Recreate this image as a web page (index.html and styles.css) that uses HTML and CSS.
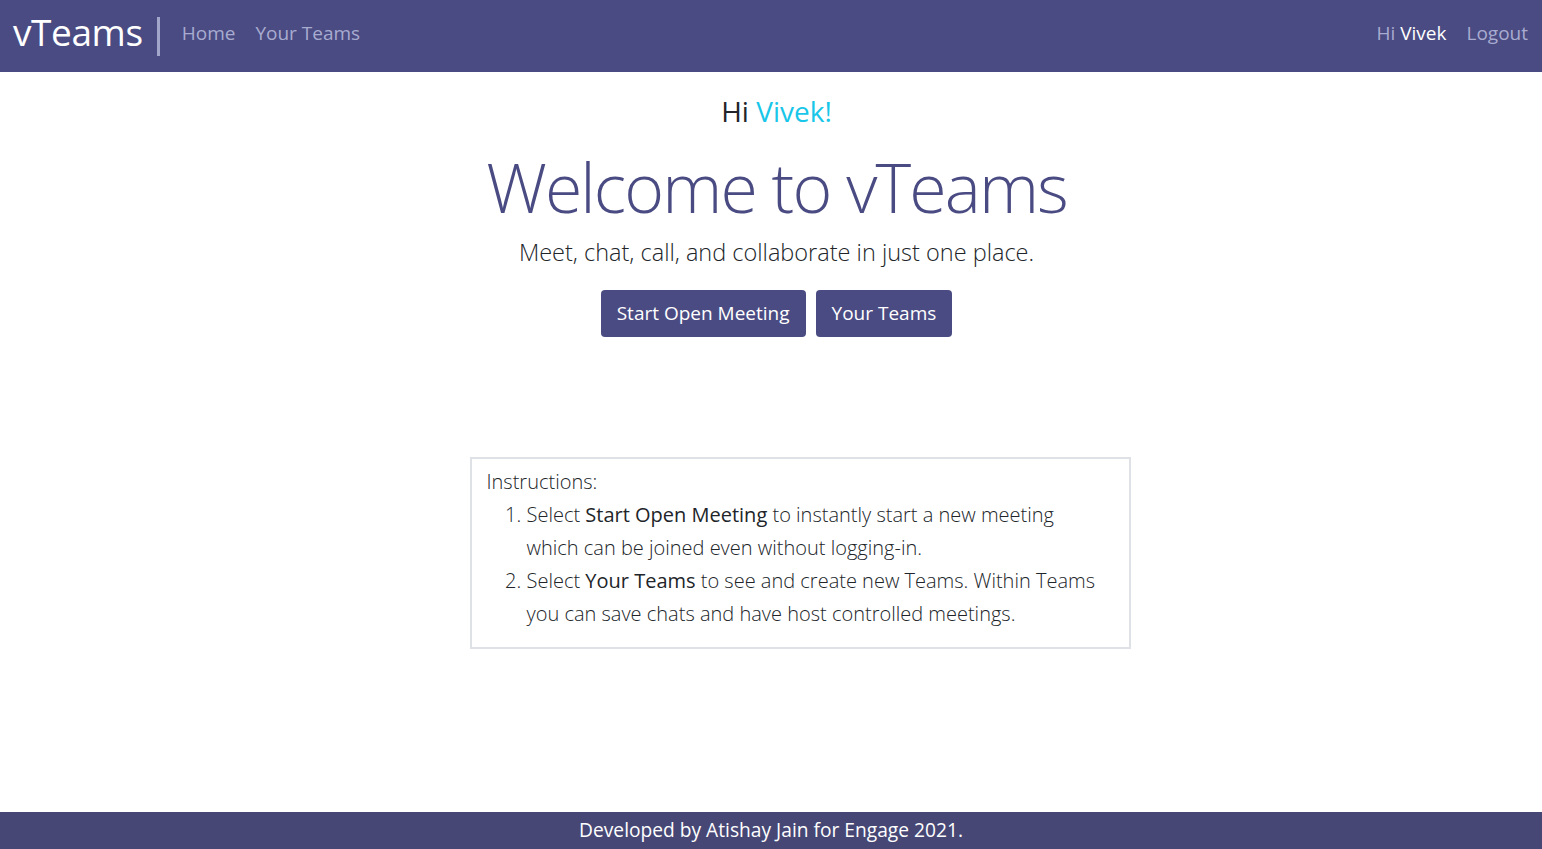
FILE: index.html
```html
<!DOCTYPE html>
<html lang="en">
<head>
<meta charset="utf-8">
<title>vTeams</title>
<link rel="stylesheet" href="styles.css">
</head>
<body>
<div class="page">
  <nav class="navbar">
    <div class="nav-left">
      <a class="brand" href="#">vTeams</a>
      <span class="divider"></span>
      <a class="nav-link" href="#">Home</a>
      <a class="nav-link" href="#">Your Teams</a>
    </div>
    <div class="nav-right">
      <span class="nav-user">Hi <span class="nav-name">Vivek</span></span>
      <a class="nav-link" href="#">Logout</a>
    </div>
  </nav>

  <main class="main">
    <section class="hero">
      <h3 class="greet">Hi <span class="greet-name">Vivek!</span></h3>
      <h1 class="title">Welcome to vTeams</h1>
      <p class="lead">Meet, chat, call, and collaborate in just one place.</p>
      <div class="actions">
        <a class="btn" href="#">Start Open Meeting</a>
        <a class="btn" href="#">Your Teams</a>
      </div>
    </section>

    <section class="info-wrap">
      <div class="info">
        <div class="info-head">Instructions:</div>
        <ol class="info-list">
          <li><span class="line">Select <b>Start Open Meeting</b> to instantly start a new meeting</span><span class="line">which can be joined even without logging-in.</span></li>
          <li><span class="line">Select <b>Your Teams</b> to see and create new Teams. Within Teams</span><span class="line">you can save chats and have host controlled meetings.</span></li>
        </ol>
      </div>
    </section>
  </main>

  <footer class="footer">Developed by Atishay Jain for Engage 2021.</footer>
</div>
</body>
</html>
```

FILE: styles.css
```css
* { box-sizing: border-box; }
html, body { margin: 0; padding: 0; height: 100%; }
body {
  font-family: "Open Sans", "Noto Sans", sans-serif;
  color: #212529;
  background: #fff;
}
a { text-decoration: none; }

.page {
  min-height: 100vh;
  display: flex;
  flex-direction: column;
}

.navbar {
  height: 72px;
  background: #4a4b82;
  display: flex;
  align-items: center;
  justify-content: space-between;
  padding: 0 14px 6px 13px;
}
.nav-left, .nav-right { display: flex; align-items: center; }
.brand {
  color: #fff;
  font-size: 37px;
  letter-spacing: -0.4px;
  line-height: 1;
  padding-bottom: 3px;
}
.divider {
  width: 3px;
  height: 39px;
  background: #a3a6cb;
  margin: 7px 22px 0 14px;
}
.nav-link {
  color: #a8abd0;
  font-size: 19px;
  margin-right: 20px;
}
.nav-right .nav-link { margin-right: 0; }
.nav-user {
  color: #a8abd0;
  font-size: 19px;
  margin-right: 20px;
}
.nav-name { color: #fff; }

.main { flex: 1; }

.hero {
  display: flex;
  flex-direction: column;
  align-items: center;
  padding-left: 11px;
  padding-top: 23px;
}
.greet {
  margin: 0;
  font-size: 28px;
  font-weight: 400;
  line-height: 1.2;
}
.greet-name { color: #17c6e8; }
.title {
  margin: 17px 0 0;
  font-size: 68px;
  font-weight: 300;
  color: #4a4b82;
  line-height: 1.2;
  letter-spacing: -1.9px;
}
.lead {
  margin: 10px 0 0;
  font-size: 23.5px;
  font-weight: 300;
  line-height: 1.3;
}
.actions {
  display: flex;
  gap: 10px;
  margin-top: 22px;
}
.btn {
  display: flex;
  align-items: center;
  justify-content: center;
  height: 47px;
  padding: 0 16px;
  background: #4a4b82;
  color: #fff;
  font-size: 19px;
  border-radius: 4px;
}

.info-wrap {
  display: flex;
  justify-content: center;
  padding-left: 58px;
  margin-top: 120px;
}
.info {
  width: 661px;
  border: 2px solid #dee2e6;
  padding: 6px 15px 17px;
  font-size: 20px;
  font-weight: 300;
  line-height: 33px;
}
.info-list {
  margin: 0;
  padding-left: 40px;
}
.line { display: block; white-space: nowrap; }
.info-list b { font-weight: 500; }

.footer {
  height: 37px;
  background: #464775;
  color: #fff;
  font-size: 19.2px;
  display: flex;
  align-items: center;
  justify-content: center;
  padding-bottom: 2px;
}
```
